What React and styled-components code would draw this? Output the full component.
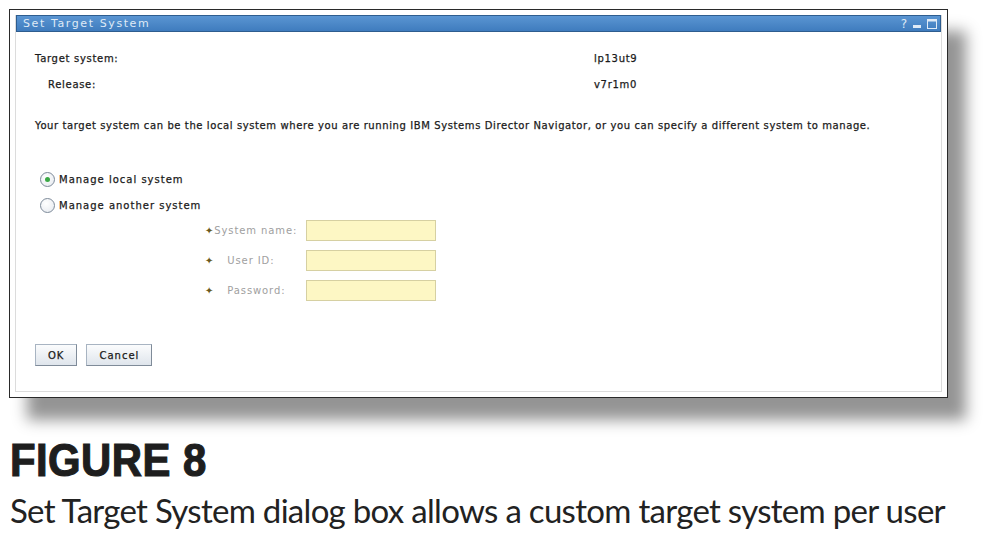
import React from 'react';
import styled, { createGlobalStyle } from 'styled-components';

const GlobalStyle = createGlobalStyle`
  html, body { margin: 0; padding: 0; background: #fff; }
  body { width: 984px; height: 535px; overflow: hidden; }
`;

const Page = styled.div`
  padding: 9px 0 0 9px;
  display: flex;
  flex-direction: column;
`;

const Frame = styled.div`
  width: 927px;
  height: 377px;
  padding: 5px;
  background: #fff;
  border: 1px solid #2a2a2a;
  box-shadow: 18px 22px 14px rgba(0, 0, 0, 0.42);
  display: flex;
`;

const Panel = styled.div`
  flex: 1;
  border: 1px solid #dcdcdc;
  border-top: none;
  display: flex;
  flex-direction: column;
  font-family: "DejaVu Sans", Verdana, sans-serif;
  font-size: 10px;
  color: #1a1a1a;
  -webkit-text-stroke: 0.25px #1a1a1a;
`;

const TitleBar = styled.div`
  height: 15px;
  background: linear-gradient(#5a95d2, #3f7cbe);
  border: 1px solid #2e5d8f;
  display: flex;
  align-items: center;
  justify-content: space-between;
  padding: 0 3px 0 6px;
`;

const Title = styled.span`
  color: #dfeaf6;
  font-size: 11px;
  letter-spacing: 1.6px;
  -webkit-text-stroke: 0;
`;

const WinIcons = styled.div`
  display: flex;
  align-items: center;
  gap: 6px;
  color: #dfeaf6;
  font-size: 12px;
  -webkit-text-stroke: 0;
`;

const Body = styled.div`
  padding: 20px 0 0 19px;
  display: flex;
  flex-direction: column;
`;

const InfoRow = styled.div`
  display: grid;
  grid-template-columns: ${p => 559 - p.$indent}px auto;
  padding-left: ${p => p.$indent}px;
  height: 26px;
  line-height: 14px;
  letter-spacing: 0.7px;
`;

const Intro = styled.p`
  margin: 16px 0 0;
  letter-spacing: 0.6px;
  white-space: nowrap;
`;

const Radios = styled.div`
  margin-top: 40px;
  padding-left: 5px;
  display: flex;
  flex-direction: column;
  gap: 10px;
`;

const RadioRow = styled.label`
  display: flex;
  align-items: center;
  gap: 4px;
  height: 16px;
  letter-spacing: 1px;
`;

const RadioDot = styled.span`
  width: 13px;
  height: 13px;
  border-radius: 50%;
  border: 1px solid #7d8a99;
  background: radial-gradient(circle at 40% 35%, #fff, #e4e8ee);
  display: flex;
  align-items: center;
  justify-content: center;
  &::after {
    content: '';
    width: 5px;
    height: 5px;
    border-radius: 50%;
    background: ${p => (p.$checked ? '#3aa845' : 'transparent')};
  }
`;

const Fields = styled.div`
  margin-top: 7px;
  padding-left: 170px;
  display: grid;
  grid-template-columns: 101px 130px;
  row-gap: 9px;
  align-items: center;
`;

const FieldLabel = styled.span`
  display: flex;
  align-items: center;
  color: #a0a0a0;
  -webkit-text-stroke: 0;
  letter-spacing: 0.9px;
  gap: ${p => p.$gap}px;
`;

const Star = styled.span`
  color: #6b5a1e;
  font-size: 10px;
`;

const Input = styled.div`
  height: 21px;
  box-sizing: border-box;
  background: #fdf7c4;
  border: 1px solid #d6d0a2;
`;

const Buttons = styled.div`
  margin-top: 43px;
  display: flex;
  gap: 9px;
`;

const Button = styled.button`
  height: 22px;
  padding: 0 ${p => p.$pad}px;
  font-family: "DejaVu Sans", Verdana, sans-serif;
  font-size: 10px;
  letter-spacing: 1px;
  color: #1a1a1a;
  -webkit-text-stroke: 0.25px #1a1a1a;
  background: linear-gradient(#fbfcfd, #dfe5ec);
  border: 1px solid #a8b4c2;
  border-right-color: #7f8b99;
  border-bottom-color: #7f8b99;
`;

const Caption = styled.div`
  margin-top: 40px;
  padding-left: 1px;
  display: flex;
  flex-direction: column;
`;

const FigureLabel = styled.div`
  font-family: "Liberation Sans", Arial, sans-serif;
  font-weight: bold;
  font-size: 46px;
  line-height: 44px;
  letter-spacing: 0.5px;
  color: #1e1e1e;
  transform: scaleX(0.91);
  transform-origin: left;
  -webkit-text-stroke: 1.2px #1e1e1e;
`;

const FigureText = styled.div`
  margin-top: 8px;
  font-family: "Lato", "Open Sans", sans-serif;
  font-size: 33px;
  line-height: 40px;
  letter-spacing: -0.7px;
  color: #222;
  white-space: nowrap;
`;

const fields = [
  { label: 'System name:', gap: 0 },
  { label: 'User ID:', gap: 13 },
  { label: 'Password:', gap: 13 },
];

export default function App() {
  return (
    <Page>
      <GlobalStyle />
      <Frame>
        <Panel>
          <TitleBar>
            <Title>Set Target System</Title>
            <WinIcons>
              <span>?</span>
              <svg width="8" height="10" viewBox="0 0 8 10">
                <rect x="0" y="6" width="8" height="3" fill="#dfeaf6" />
              </svg>
              <svg width="10" height="10" viewBox="0 0 10 10">
                <rect x="0.5" y="0.5" width="9" height="9" fill="none" stroke="#dfeaf6" />
                <rect x="0.5" y="0.5" width="9" height="2" fill="#dfeaf6" />
              </svg>
            </WinIcons>
          </TitleBar>
          <Body>
            <InfoRow $indent={0}>
              <span>Target system:</span>
              <span>lp13ut9</span>
            </InfoRow>
            <InfoRow $indent={13}>
              <span>Release:</span>
              <span>v7r1m0</span>
            </InfoRow>
            <Intro>
              Your target system can be the local system where you are running IBM Systems Director Navigator, or you can specify a different system to manage.
            </Intro>
            <Radios>
              <RadioRow>
                <RadioDot $checked />
                Manage local system
              </RadioRow>
              <RadioRow>
                <RadioDot />
                Manage another system
              </RadioRow>
            </Radios>
            <Fields>
              {fields.map(f => (
                <React.Fragment key={f.label}>
                  <FieldLabel $gap={f.gap}>
                    <Star>✦</Star>
                    {f.label}
                  </FieldLabel>
                  <Input />
                </React.Fragment>
              ))}
            </Fields>
            <Buttons>
              <Button $pad={12}>OK</Button>
              <Button $pad={12}>Cancel</Button>
            </Buttons>
          </Body>
        </Panel>
      </Frame>
      <Caption>
        <FigureLabel>FIGURE 8</FigureLabel>
        <FigureText>Set Target System dialog box allows a custom target system per user</FigureText>
      </Caption>
    </Page>
  );
}
